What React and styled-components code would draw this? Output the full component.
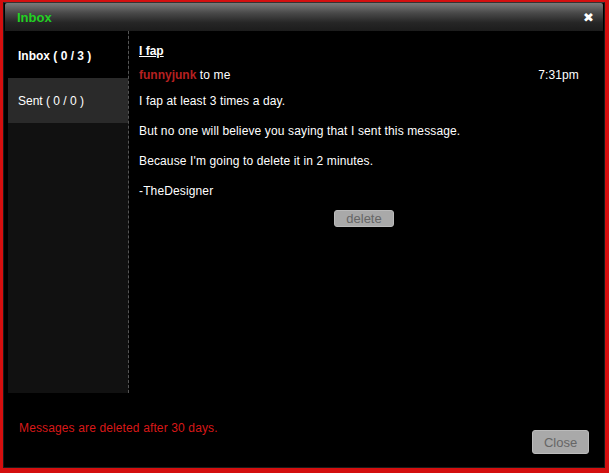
import React from "react";
import styled, { createGlobalStyle } from "styled-components";

const GlobalStyle = createGlobalStyle`
  html, body {
    margin: 0;
    padding: 0;
    background: #d40f0f;
    font-family: "Liberation Sans", Arial, sans-serif;
  }
`;

const Frame = styled.div`
  width: 609px;
  height: 473px;
  padding: 2px 4px 5px 3px;
  box-sizing: border-box;
`;

const Dialog = styled.div`
  height: 466px;
  background: #000;
  border: 1px solid #1a1a1a;
  border-top: 1px solid #333;
  box-sizing: border-box;
  padding: 0 1px;
  display: flex;
  flex-direction: column;
`;

const TitleBar = styled.div`
  height: 28px;
  display: flex;
  align-items: center;
  justify-content: space-between;
  padding: 0 9px 0 12px;
  background: linear-gradient(#7a7a7a 0%, #4a4a4a 35%, #262626 70%, #1c1c1c 100%);
  border-radius: 2px 2px 0 0;
`;

const Title = styled.span`
  color: #22d022;
  font-size: 13px;
  font-weight: bold;
`;

const CloseX = styled.span`
  color: #fff;
  font-size: 13px;
  font-weight: bold;
  font-family: "DejaVu Sans", sans-serif;
`;

const Body = styled.div`
  display: flex;
  height: 362px;
  padding-left: 3px;
`;

const Sidebar = styled.div`
  width: 120px;
  background: #111;
  border-right: 1px dashed #555;
  display: flex;
  flex-direction: column;
`;

const Tab = styled.div`
  height: ${(p) => (p.$active ? "47px" : "45px")};
  display: flex;
  align-items: center;
  padding: ${(p) => (p.$active ? "2px" : "0")} 0 0 10px;
  box-sizing: border-box;
  font-size: 12px;
  color: #fff;
  font-weight: ${(p) => (p.$active ? "bold" : "normal")};
  background: ${(p) => (p.$active ? "#000" : "#2a2a2a")};
`;

const Content = styled.div`
  flex: 1;
  padding: 13px 24px 0 10px;
  color: #fff;
  font-size: 12px;
  letter-spacing: 0.13px;
`;

const Subject = styled.div`
  font-weight: bold;
  text-decoration: underline;
  line-height: 15px;
  letter-spacing: 0;
`;

const Meta = styled.div`
  display: flex;
  justify-content: space-between;
  margin-top: 9px;
  line-height: 15px;
`;

const Sender = styled.span`
  color: #b52020;
  font-weight: bold;
  letter-spacing: 0;
`;

const Para = styled.p`
  margin: ${(p) => (p.$first ? "11px" : "15px")} 0 0;
  line-height: 15px;
`;

const ButtonRow = styled.div`
  margin: 11px -20px 0 -10px;
  display: flex;
  justify-content: center;
`;

const GrayButton = styled.button`
  font-family: "Liberation Sans", Arial, sans-serif;
  background: #a9a9a9;
  color: #666;
  border: 1px solid #bbb;
  border-radius: 3px;
  padding: 0;
  width: ${(p) => p.$w}px;
  height: ${(p) => p.$h}px;
  font-size: ${(p) => p.$fs}px;
`;

const Footer = styled.div`
  flex: 1;
  display: flex;
  justify-content: space-between;
  padding: 28px 14px 0 14px;
`;

const Notice = styled.div`
  color: #d81818;
  font-size: 12px;
  line-height: 15px;
  letter-spacing: 0.13px;
`;

const CloseButtonWrap = styled.div`
  padding-top: 9px;
`;

export default function App() {
  return (
    <Frame>
      <GlobalStyle />
      <Dialog>
        <TitleBar>
          <Title>Inbox</Title>
          <CloseX>✖</CloseX>
        </TitleBar>
        <Body>
          <Sidebar>
            <Tab $active>Inbox ( 0 / 3 )</Tab>
            <Tab>Sent ( 0 / 0 )</Tab>
          </Sidebar>
          <Content>
            <Subject>I fap</Subject>
            <Meta>
              <span>
                <Sender>funnyjunk</Sender> to me
              </span>
              <span>7:31pm</span>
            </Meta>
            <Para $first>I fap at least 3 times a day.</Para>
            <Para>But no one will believe you saying that I sent this message.</Para>
            <Para>Because I'm going to delete it in 2 minutes.</Para>
            <Para>-TheDesigner</Para>
            <ButtonRow>
              <GrayButton $w={60} $h={17} $fs={13}>delete</GrayButton>
            </ButtonRow>
          </Content>
        </Body>
        <Footer>
          <Notice>Messages are deleted after 30 days.</Notice>
          <CloseButtonWrap>
            <GrayButton $w={57} $h={24} $fs={13}>Close</GrayButton>
          </CloseButtonWrap>
        </Footer>
      </Dialog>
    </Frame>
  );
}
